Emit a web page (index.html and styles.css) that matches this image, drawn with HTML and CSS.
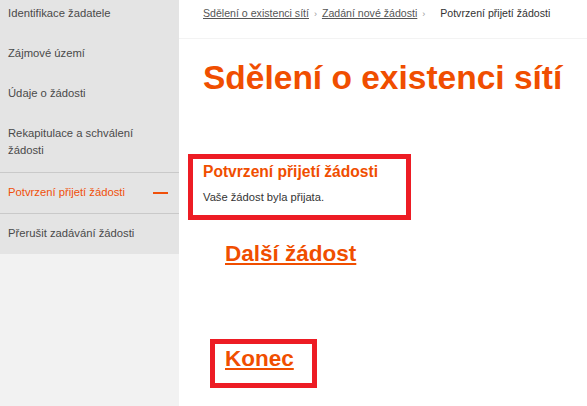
FILE: index.html
```html
<!DOCTYPE html>
<html>
<head>
  <meta charset="UTF-8" />
  <title>Sdělení o existenci sítí</title>
  <link rel="stylesheet" href="styles.css">
</head>
<body>
  <div class="page">
    <div class="sidebar">
      <ul class="steps">
        <li class="step first">Identifikace žadatele</li>
        <li class="step">Zájmové území</li>
        <li class="step">Údaje o žádosti</li>
        <li class="step">Rekapitulace a schválení žádosti</li>
        <li class="step active"><span>Potvrzení přijetí žádosti</span><span class="dash"></span></li>
        <li class="step">Přerušit zadávání žádosti</li>
      </ul>
    </div>
    <div class="main">
      <div class="breadcrumb">
        <a href="#">Sdělení o existenci sítí</a>
        <span class="sep">›</span>
        <a href="#">Zadání nové žádosti</a>
        <span class="sep">›</span>
        <span class="current">Potvrzení přijetí žádosti</span>
      </div>
      <h1>Sdělení o existenci sítí</h1>
      <div class="notice">
        <h2>Potvrzení přijetí žádosti</h2>
        <p>Vaše žádost byla přijata.</p>
      </div>
      <a class="big-link next" href="#">Další žádost</a>
      <div class="end-box">
        <a class="big-link" href="#">Konec</a>
      </div>
    </div>
  </div>
</body>
</html>
```

FILE: styles.css
```css
body {
  margin: 0;
  font-family: "Liberation Sans", Arial, sans-serif;
  background: #fff;
  color: #333;
}
.page {
  display: flex;
  align-items: flex-start;
  min-height: 406px;
}
.sidebar {
  width: 179px;
  flex-shrink: 0;
  background: #f2f2f2;
  align-self: stretch;
}
.steps {
  list-style: none;
  margin: 0;
  padding: 0;
  background: #e4e4e4;
}
.step {
  padding: 11px 38px 12px 8px;
  font-size: 11.25px;
  line-height: 17px;
  color: #4a4a4a;
}
.step.first {
  padding-top: 5px;
}
.step:nth-child(4) {
  padding-bottom: 13px;
  border-bottom: 1px solid #c9c9c9;
}
.step.active {
  display: flex;
  justify-content: space-between;
  align-items: center;
  color: #f0500a;
  border-bottom: 1px solid #c9c9c9;
  padding-right: 11px;
}
.dash {
  width: 15px;
  height: 2px;
  background: #f0500a;
}
.main {
  flex: 1;
  padding-left: 24px;
}
.breadcrumb {
  padding: 5px 0 16px 24px;
  margin-left: -24px;
  font-size: 10.6px;
  line-height: 16px;
  white-space: nowrap;
  border-bottom: 1px solid #f3f3f3;
}
.breadcrumb a {
  color: #555;
}
.breadcrumb .sep {
  color: #999;
  font-size: 9px;
  margin: 0 2px;
}
.breadcrumb .current {
  color: #333;
  margin-left: 10px;
}
h1 {
  margin: 19px 0 0;
  font-size: 33.5px;
  line-height: 40px;
  color: #f04e00;
}
.notice {
  margin: 56px 0 0 -15px;
  width: 223px;
  box-sizing: border-box;
  border: 5px solid #ed1c24;
  padding: 3px 10px 9px;
}
.notice h2 {
  margin: 0;
  font-size: 15.6px;
  line-height: 20px;
  color: #f04e00;
}
.notice p {
  margin: 7px 0 0;
  font-size: 11.2px;
  line-height: 17px;
  color: #333;
}
.big-link {
  font-size: 22.5px;
  line-height: 26px;
  font-weight: bold;
  color: #f04e00;
}
.next {
  display: inline-block;
  margin: 21px 0 0 22px;
}
.end-box {
  margin: 72px 0 0 7px;
  width: 107px;
  height: 49px;
  box-sizing: border-box;
  border: 5px solid #ed1c24;
  padding: 2px 10px 0;
}
```
